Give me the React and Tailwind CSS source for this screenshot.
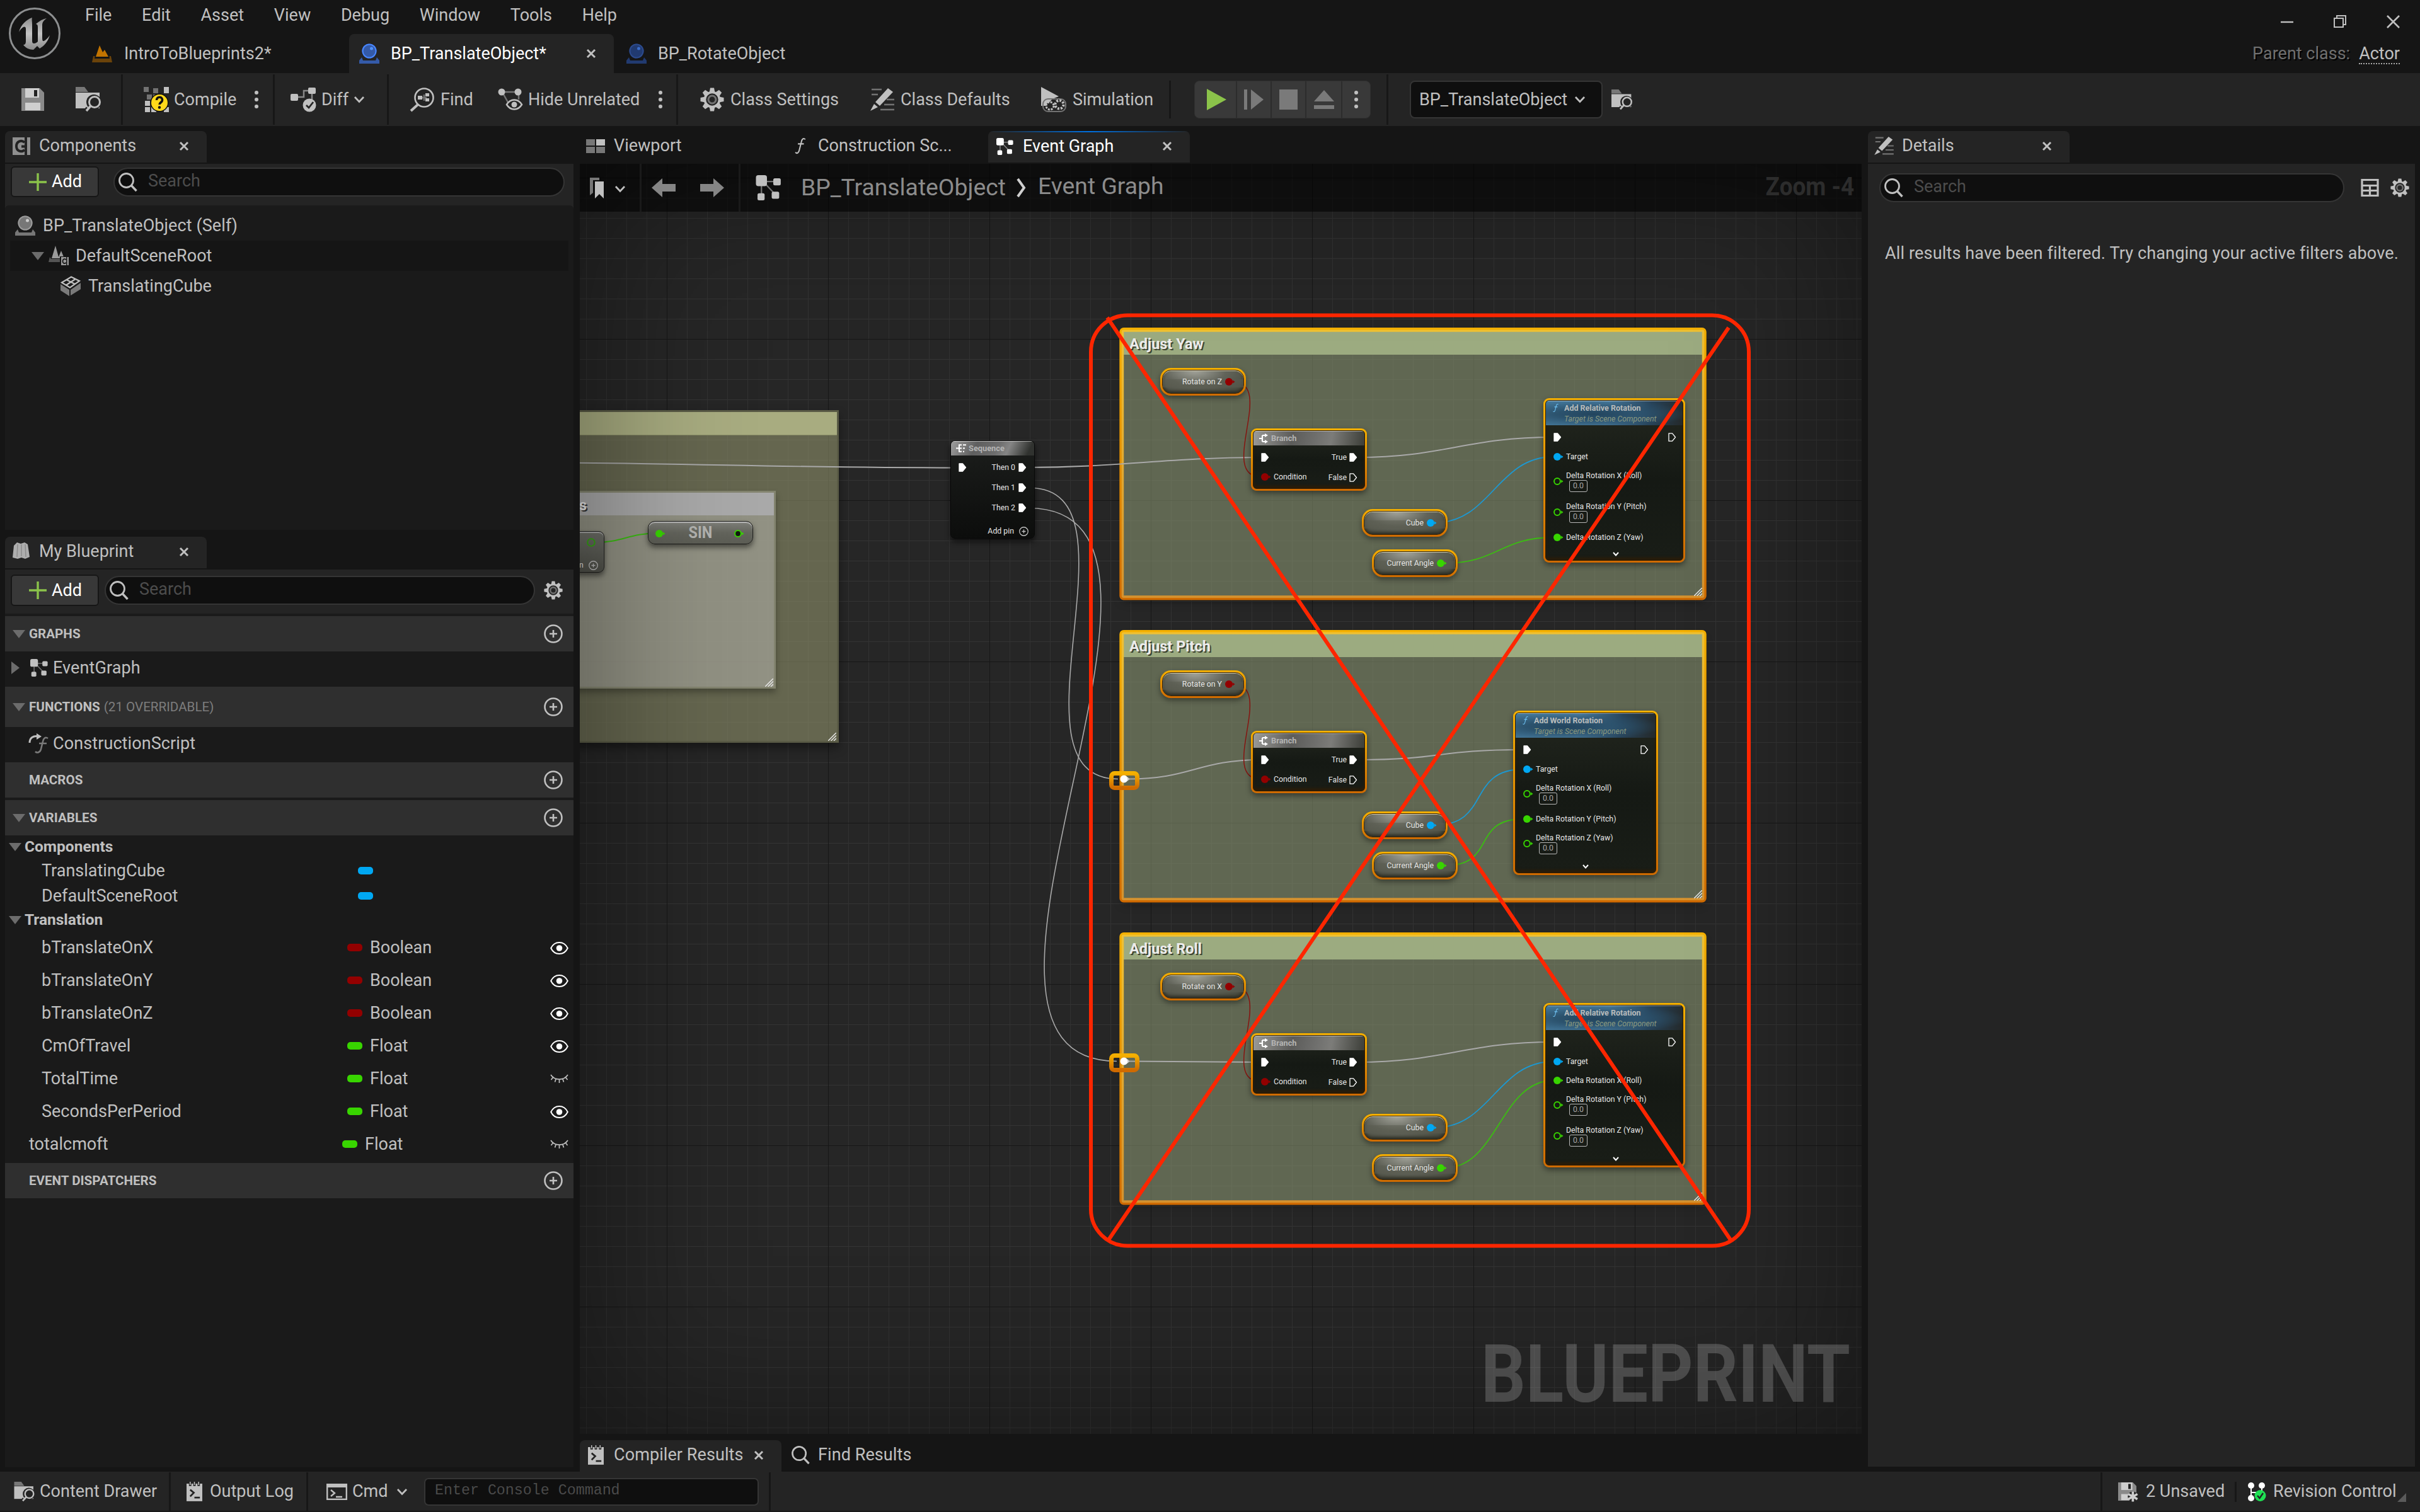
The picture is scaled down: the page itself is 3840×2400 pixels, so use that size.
import React from "react";

/* ---------- icons ---------- */
const Svg = ({ c = "", vb = "0 0 32 32", children }) => (
  <svg viewBox={vb} className={"shrink-0 overflow-visible " + c} fill="none">{children}</svg>
);
const L = "#c0c0c0", D = "#727272";

const Logo = () => (
  <Svg c="w-[84px] h-[84px]" vb="0 0 84 84">
    <defs>
      <linearGradient id="lg" x1="0" y1="0" x2="0" y2="1">
        <stop offset="0" stopColor="#8f8f8f" /><stop offset=".5" stopColor="#c4c4c4" /><stop offset="1" stopColor="#8a8a8a" />
      </linearGradient>
    </defs>
    <circle cx="42" cy="42" r="39.500" stroke="#8d8f90" strokeWidth="3" />
    <path d="M38 17 C29 20 20 28 17 40 C20 34 25 30 27 32 C28.500 33 28 37 28 41 V54 C28 58 27 60 24 60 C27 65 34 68 40 68 L46 62 L50 66 C57 62 63 55 66 45 C62 51 57 55 55 54 C54 53 54 50 54 46 V29 C54 24 57 21 61 18 C55 19 50 22 44 27 C47 28 47 30 47 33 V55 C45 57 43 58 41 58 C38 58 38 55 38 52 V28 C38 23 37 20 38 17 Z" fill="url(#lg)" />
  </Svg>
);
const LevelIcon = () => (
  <Svg c="w-[32px] h-[28px]" vb="0 0 32 28">
    <path d="M6 19 L12 1 L17 12 L20 8 L26 19 Z" fill="#c27400" />
    <path d="M2 18 H4.500 L4 22 H28 L27.500 18 H30 L32 28 H0 Z" fill="#6b430a" />
  </Svg>
);
const Ball = ({ c, a, b, hi }) => (
  <Svg c={c} vb="0 0 32 32">
    <path d="M4 22 L0 27 V32 H32 V27 L28 22 L26 27 H6 Z" fill={b} />
    <circle cx="16" cy="12" r="11.500" fill={b} /><circle cx="16" cy="12" r="10.500" stroke={a} strokeWidth="2" />
    <circle cx="19.500" cy="8" r="2.500" fill={hi} />
  </Svg>
);
const XIcon = ({ c = "w-[14px] h-[14px]" }) => (
  <Svg c={c} vb="0 0 14 14"><path d="M1 1 L13 13 M13 1 L1 13" stroke={L} strokeWidth="3" /></Svg>
);
const Chevron = ({ c = "w-[18px] h-[12px]" }) => (
  <Svg c={c} vb="0 0 18 12"><path d="M2 2 L9 9.500 L16 2" stroke={L} strokeWidth="2.800" /></Svg>
);
const Kebab = () => (
  <Svg c="w-[8px] h-[30px]" vb="0 0 8 30"><circle cx="4" cy="4" r="3" fill={L} /><circle cx="4" cy="15" r="3" fill={L} /><circle cx="4" cy="26" r="3" fill={L} /></Svg>
);
const SaveIcon = ({ c = "w-[36px] h-[36px]", star }) => (
  <Svg c={c} vb="0 0 36 36">
    <path d="M0 0 H29 L36 7 V36 H0 Z" fill="#8a8a8a" />
    <rect x="6" y="0" width="22" height="15" fill="#cfcfcf" /><rect x="20" y="3" width="5" height="10" fill="#222" />
    <rect x="6" y="23" width="24" height="12" fill="#cfcfcf" />
    {star && <><circle cx="29" cy="28" r="10" fill="#242424" /><path d="M29 18 V38 M20 23 L38 33 M38 23 L20 33" stroke="#cfcfcf" strokeWidth="4.500" /></>}
  </Svg>
);
const FolderIcon = ({ c = "w-[40px] h-[40px]", bg = "#242424" }) => (
  <Svg c={c} vb="0 0 40 40">
    <path d="M0 0 H14 L20 8 H0 Z" fill="#777" />
    <path d="M0 9 H38 V34 H0 Z" fill={L} />
    <circle cx="29" cy="24" r="12" fill={bg} /><path d="M20 34 L14 42" stroke={bg} strokeWidth="8" />
    <circle cx="30" cy="24" r="8.500" stroke={L} strokeWidth="3" /><path d="M24 30 L17 38" stroke={L} strokeWidth="3.500" />
  </Svg>
);
const CompileIcon = () => (
  <Svg c="w-[40px] h-[40px]" vb="0 0 40 40">
    {[[0, 0, D], [15, 2, D], [32, 0, L], [5, 12, D], [15, 12, D], [32, 2, L], [2, 22, L], [2, 32, L], [12, 32, L], [32, 32, L]].map(([x, y, f], i) => (
      <rect key={i} x={x} y={y} width="8" height="8" fill={f} />
    ))}
    <circle cx="25" cy="25" r="14.500" fill="#111" /><circle cx="25" cy="25" r="13" fill="#ffd91a" />
    <path d="M20.500 21 C20.500 14.500 30 15 29.500 21 C29.500 24.500 25 24.500 25 28" stroke="#111" strokeWidth="3.600" />
    <circle cx="25" cy="32.500" r="2.200" fill="#111" />
  </Svg>
);
const DiffIcon = () => (
  <Svg c="w-[40px] h-[40px]" vb="0 0 40 40">
    <path d="M8 16 H21 V6 H30 M34 10 V20" stroke="#888" strokeWidth="2.500" />
    <rect x="0" y="11" width="12" height="11" rx="2" fill={L} /><rect x="28" y="1" width="12" height="10" rx="2" fill={L} />
    <circle cx="30" cy="29" r="10.500" fill={L} /><path d="M25 29 L29 33 L36 24" stroke="#242424" strokeWidth="2.800" />
  </Svg>
);
const FindIcon = () => (
  <Svg c="w-[38px] h-[38px]" vb="0 0 38 38">
    <circle cx="22" cy="16" r="14.500" stroke={L} strokeWidth="2.600" /><path d="M12 27 L1 37" stroke={L} strokeWidth="4" />
    <path d="M15 16 H26 M22 11 V21" stroke={D} strokeWidth="2.500" />
    <rect x="12" y="13" width="7" height="6" fill={L} /><rect x="24" y="9" width="6" height="5" fill={L} /><rect x="24" y="17" width="6" height="5" fill={L} />
  </Svg>
);
const HideIcon = () => (
  <Svg c="w-[38px] h-[36px]" vb="0 0 38 36">
    <path d="M6 6 H32 M8 8 L18 26 M33 10 V18" stroke={D} strokeWidth="2.500" />
    <circle cx="6" cy="6" r="5.500" fill={L} /><circle cx="32" cy="6" r="5.500" fill={L} />
    <path d="M14 26 C20 16 32 16 38 26 C32 36 20 36 14 26 Z" fill="#242424" stroke={L} strokeWidth="2.500" /><circle cx="26" cy="26" r="4.500" fill={L} />
  </Svg>
);
const Gear = ({ c, teeth = L, core = D }) => (
  <Svg c={c} vb="0 0 38 38">
    {[0, 45, 90, 135, 180, 225, 270, 315].map((a) => (
      <path key={a} d="M16 0.500 H22 L23.500 8 H14.500 Z" fill={teeth} transform={`rotate(${a} 19 19)`} />
    ))}
    <circle cx="19" cy="19" r="11.500" stroke={teeth} strokeWidth="3.600" />
    <circle cx="19" cy="19" r="6" stroke={core} strokeWidth="3" />
  </Svg>
);
const PenIcon = ({ c }) => (
  <Svg c={c} vb="0 0 38 36">
    <path d="M2 2 H18 M2 10 H12 M26 18 H38 M22 26 H38 M16 34 H38" stroke={D} strokeWidth="2.600" />
    <path d="M28 0 L36 6 L15 28 L8 22 Z" fill={L} /><path d="M6 25 L12 30 L0 36 Z" fill={L} />
  </Svg>
);
const SimIcon = () => (
  <Svg c="w-[40px] h-[40px]" vb="0 0 40 40">
    <path d="M0 0 L28 15 L18 19 L8 30 L0 30 Z" fill={L} />
    <rect x="3" y="19" width="36" height="20" rx="8" stroke={D} strokeWidth="2" />
    <circle cx="14" cy="30" r="6" fill="#242424" stroke={L} strokeWidth="3" strokeDasharray="3 1.700" /><circle cx="29" cy="28" r="6.500" fill="#242424" stroke={L} strokeWidth="4" strokeDasharray="3 2" />
  </Svg>
);
const GraphIcon = ({ c, f = L, s = D }) => (
  <Svg c={c} vb="0 0 32 32">
    <path d="M8 8 H26 M7 10 V26 M9 8 L25 25" stroke={s} strokeWidth="1.800" />
    <rect x="0" y="0" width="14" height="14" rx="3" fill={f} /><rect x="22" y="4" width="9.500" height="9" rx="2" fill={f} />
    <rect x="2" y="23" width="9" height="9" rx="2" fill={f} /><rect x="20" y="21" width="9.500" height="9" rx="2" fill={f} />
  </Svg>
);
const SearchIcon = ({ c = "w-[30px] h-[30px]" }) => (
  <Svg c={c} vb="0 0 30 30"><circle cx="12.500" cy="12.500" r="11" stroke={L} strokeWidth="2.800" /><path d="M20 20 L28.500 29" stroke={L} strokeWidth="3.400" /></Svg>
);
const Plus = () => (
  <Svg c="w-[28px] h-[28px]" vb="0 0 28 28"><path d="M14 0 V28 M0 14 H28" stroke="#8bc34a" strokeWidth="3.400" /></Svg>
);
const PlusCircle = ({ c = "w-[30px] h-[30px]" }) => (
  <Svg c={c} vb="0 0 30 30"><circle cx="15" cy="15" r="13.500" stroke={L} strokeWidth="2.600" /><path d="M15 9 V21 M9 15 H21" stroke={L} strokeWidth="2.600" /></Svg>
);
const CompIcon = ({ c = "w-[28px] h-[28px]" }) => (
  <Svg c={c} vb="0 0 28 28">
    <path d="M0 0 H19 V28 H0 Z" fill="#8f8f8f" /><rect x="23" y="0" width="5" height="28" fill="#8f8f8f" />
    <path d="M19 8 C14 3.500 6 6 6 14 C6 22 14 24.500 19 20 M14 14.500 H23" stroke="#222" strokeWidth="4" />
  </Svg>
);
const FIcon = ({ c, f = L }) => (
  <Svg c={c} vb="0 0 22 32"><path d="M21 3 C17 -1 14 3 13 8 L9 24 C8 30 4 33 1 29 M6 12 H18" stroke={f} strokeWidth="2.600" /></Svg>
);
const Folded = () => (
  <Svg c="w-[30px] h-[32px]" vb="0 0 30 32"><path d="M3 6 L8 1 L14 3 L20 1 L25 4 L28 24 L21 27 L15 25 L9 27 L1 25 Z" fill="#aeaeae" /><path d="M9 4 L8 24 M15 4 V23 M21 4 L22 24" stroke="#8c8c8c" strokeWidth="1.500" /></Svg>
);
const ListDoc = ({ c }) => (
  <Svg c={c} vb="0 0 26 32">
    <path d="M0 3 H26 V32 H0 Z" fill={L} /><path d="M6 0 V7 M13 0 V7 M20 0 V7" stroke="#242424" strokeWidth="4" /><path d="M6 0 V5 M13 0 V5 M20 0 V5" stroke={L} strokeWidth="1.600" />
    <path d="M6 13 L12 18 L6 24" stroke="#242424" strokeWidth="2.800" /><path d="M13 26 H22" stroke="#242424" strokeWidth="2.800" />
  </Svg>
);
const CmdIcon = () => (
  <Svg c="w-[33px] h-[26px]" vb="0 0 33 26"><rect x="1.200" y="1.200" width="30.600" height="23.600" stroke={L} strokeWidth="2.400" /><rect x="0" y="0" width="33" height="6" fill={L} /><path d="M7 10 L13 15 L7 20 M15 21 H25" stroke={L} strokeWidth="2.400" /></Svg>
);
const Eye = () => (
  <Svg c="w-[29px] h-[20px]" vb="0 0 29 20"><path d="M1.200 10 C7 -2 22 -2 27.800 10 C22 22 7 22 1.200 10 Z" stroke="#fff" strokeWidth="2" /><circle cx="14.500" cy="10" r="4.800" fill="#fff" /></Svg>
);
const EyeShut = () => (
  <Svg c="w-[29px] h-[15px]" vb="0 0 29 15"><path d="M1 1 C7 10.500 22 10.500 28 1 M4.500 5 L1.500 9 M9 8 L7.500 12.500 M14.500 8.500 V14 M20 8 L21.500 12.500 M24.500 5 L27.500 9" stroke={L} strokeWidth="1.700" /></Svg>
);
const TriD = () => <Svg c="w-[20px] h-[13px]" vb="0 0 20 13"><path d="M0 0 H20 L10 13 Z" fill="#6c6c6c" /></Svg>;
const TriR = () => <Svg c="w-[13px] h-[20px]" vb="0 0 13 20"><path d="M0 0 L13 10 L0 20 Z" fill="#6c6c6c" /></Svg>;

/* ---------- shared pieces ---------- */
const Sep = ({ c = "h-[80px]" }) => <div className={"w-[3px] shrink-0 bg-[#171717] " + c} />;
const SearchBox = ({ c }) => (
  <div className={"flex items-center rounded-full border-2 border-[#353535] bg-[#0f0f0f] pl-[6px] " + c}>
    <SearchIcon />
    <span className="-mt-[3px] ml-[17px] text-[#4c4c4c]">Search</span>
  </div>
);
const AddButton = ({ c }) => (
  <div className={"flex shrink-0 items-center rounded-[6px] border-2 border-[#161616] bg-[#383838] pl-[27px] text-white " + c}>
    <Plus /><span className="ml-[8px]">Add</span>
  </div>
);
const PanelTab = ({ c, children }) => (
  <div className={"flex h-[50px] shrink-0 items-center rounded-t-[8px] bg-[#242424] pb-[3px] " + c}>{children}</div>
);

/* ---------- header ---------- */
const Header = () => (
  <header className="flex h-[116px] bg-[#151515]">
    <div className="w-[110px] pl-[13px] pt-[11px]"><Logo /></div>
    <div className="flex w-[2600px] flex-col justify-between">
      <nav className="flex h-[48px] items-center gap-[47.700px] pl-[25px]">
        {["File", "Edit", "Asset", "View", "Debug", "Window", "Tools", "Help"].map((m) => <span key={m}>{m}</span>)}
      </nav>
      <div className="flex h-[62px] items-center">
        <div className="flex w-[444px] items-center pl-[36px]"><LevelIcon /><span className="ml-[19px]">IntroToBlueprints2*</span></div>
        <div className="flex h-[62px] w-[420px] items-center rounded-t-[8px] bg-[#242424] pl-[16px] text-white">
          <Ball c="w-[32px] h-[32px]" a="#4886ff" b="#345aa8" hi="#4f92ff" />
          <span className="ml-[18px] w-[311px]">BP_TranslateObject*</span><XIcon />
        </div>
        <div className="flex items-center pl-[20px]">
          <Ball c="w-[32px] h-[32px]" a="#2c4a8c" b="#213a70" hi="#3a6cc8" /><span className="ml-[18px]">BP_RotateObject</span>
        </div>
      </div>
    </div>
    <div className="ml-auto flex flex-col items-end pr-[32px]">
      <div className="flex h-[68px] items-center gap-[64px]">
        <Svg c="w-[20px] h-[20px]" vb="0 0 20 20"><path d="M0 11 H20" stroke={L} strokeWidth="2.400" /></Svg>
        <Svg c="w-[20px] h-[20px]" vb="0 0 20 20"><rect x="1" y="5" width="14" height="14" stroke={L} strokeWidth="2" /><path d="M5 5 V1 H19 V15 H15" stroke={L} strokeWidth="2" /></Svg>
        <Svg c="w-[21px] h-[21px]" vb="0 0 21 21"><path d="M1 1 L20 20 M20 1 L1 20" stroke={L} strokeWidth="2.600" /></Svg>
      </div>
      <div className="flex h-[34px] items-center">
        <span className="mr-[14px] text-[#6f6f6f] [text-shadow:2px_2px_0_#000]">Parent class:</span>
        <span className="mt-[3px] border-b-2 border-dotted border-[#aaa] pb-[1px]">Actor</span>
      </div>
    </div>
  </header>
);

const Toolbar = () => (
  <div className="flex h-[84px] items-center bg-[#242424]">
    <div className="flex w-[192px] items-center pl-[34px]"><SaveIcon /><FolderIcon c="ml-[50px] w-[40px] h-[40px]" /></div><Sep />
    <div className="flex w-[238px] items-center pl-[33px]"><CompileIcon /><span className="ml-[8px] w-[127px]">Compile</span><Kebab /></div><Sep />
    <div className="flex w-[178px] items-center pl-[25px]"><DiffIcon /><span className="ml-[9px] w-[51px]">Diff</span><Chevron /></div><Sep />
    <div className="flex w-[456px] items-center pl-[34px]"><FindIcon /><span className="ml-[10px] w-[91px]">Find</span><HideIcon /><span className="ml-[10px] w-[206px]">Hide Unrelated</span><Kebab /></div><Sep />
    <div className="flex w-[779px] items-center pl-[35px]">
      <Gear c="w-[38px] h-[38px]" /><span className="ml-[10px] w-[222px]">Class Settings</span>
      <PenIcon c="w-[38px] h-[36px]" /><span className="ml-[10px] w-[223px]">Class Defaults</span>
      <SimIcon /><span className="ml-[10px]">Simulation</span>
    </div><Sep c="h-[60px]" />
    <div className="ml-[37px] flex h-[60px] w-[280px] items-center divide-x-2 divide-[#2c2c2c] rounded-[8px] border border-[#303030] bg-[#393939]">
      <div className="flex h-full w-[67px] items-center pl-[19px]"><Svg c="w-[31px] h-[34px]" vb="0 0 31 34"><path d="M0 0 L31 17 L0 34 Z" fill="#8bc34a" /></Svg></div>
      <div className="flex h-full w-[55px] items-center justify-center"><Svg c="w-[31px] h-[32px]" vb="0 0 31 32"><path d="M0 0 H5 V32 H0 Z M11 0 L31 16 L11 32 Z" fill="#7a7a7a" /></Svg></div>
      <div className="flex h-full w-[55px] items-center justify-center"><div className="h-[32px] w-[29px] bg-[#7a7a7a]" /></div>
      <div className="flex h-full w-[57px] items-center justify-center"><Svg c="w-[32px] h-[32px]" vb="0 0 32 32"><path d="M16 1 L32 19 H0 Z M0 25 H32 V31 H0 Z" fill="#7a7a7a" /></Svg></div>
      <div className="flex h-full flex-1 items-center justify-center"><Kebab /></div>
    </div>
    <Sep c="ml-[25px] h-[80px]" />
    <div className="ml-[34px] flex h-[60px] w-[306px] items-center rounded-[8px] border-2 border-[#353535] bg-[#0f0f0f] pl-[13px]"><span className="w-[246px]">BP_TranslateObject</span><Chevron /></div>
    <FolderIcon c="ml-[14px] w-[33px] h-[33px]" />
  </div>
);

/* ---------- left column ---------- */
const Section = ({ c = "h-[56px]", title, note, open }) => (
  <div className={"flex items-center bg-[#2f2f2f] pl-[12px] pr-[17px] text-[20.600px] font-bold " + c}>
    <div className="w-[26px]">{open && <TriD />}</div>
    <span>{title}</span>{note && <span className="ml-[6px] font-normal text-[#7d7d7d]">{note}</span>}
    <div className="ml-auto"><PlusCircle /></div>
  </div>
);
const VarRow = ({ name, type, shut, root }) => (
  <div className={"flex h-[52px] items-center pr-[8px] " + (root ? "pl-[38px]" : "pl-[58px]")}>
    <span className={root ? "w-[497px]" : "w-[485px]"}>{name}</span>
    <span className={"mr-[12px] h-[12px] w-[24px] rounded-[5px] " + (type === "Boolean" ? "bg-[#930000]" : "bg-[#38d500]")} />
    <span>{type}</span>
    <div className="ml-auto mt-[1px]">{shut ? <EyeShut /> : <Eye />}</div>
  </div>
);
const Left = () => (
  <div className="flex w-[910px] shrink-0 flex-col pl-[8px]">
    <PanelTab c="mt-[8px] w-[320px] pl-[12px]"><CompIcon /><span className="ml-[14px] w-[223px]">Components</span><XIcon /></PanelTab>
    <div className="mt-[2px] h-[581px] bg-[#242424]">
      <div className="flex h-[66px] items-center pb-[9px] pl-[9px]"><AddButton c="h-[49px] w-[140px]" /><SearchBox c="ml-[23px] h-[46px] w-[716px]" /></div>
      <div className="h-[515px] rounded-t-[6px] bg-[#1a1a1a] px-[8px] pt-[8px]">
        <div className="flex h-[48px] items-center pl-[8px]"><Ball c="w-[32px] h-[32px]" a="#9a9a9a" b="#777" hi="#ccc" /><span className="ml-[12px] tracking-[.08px]">BP_TranslateObject (Self)</span></div>
        <div className="flex h-[48px] items-center bg-[#151515] pl-[34px]">
          <TriD />
          <Svg c="ml-[7px] h-[32px] w-[32px]" vb="0 0 32 32">
            <path d="M5 20 L11 0 L16 18 L20 8 L25 20 Z" fill="#9a9a9a" /><path d="M2 18 L0 26 H18 V21 H4 Z" fill="#555" />
            <rect x="18" y="17" width="14" height="15" fill="#151515" /><rect x="20" y="18" width="8" height="13" fill="#9a9a9a" /><rect x="29.500" y="18" width="2.500" height="13" fill="#9a9a9a" /><path d="M28 22 C24 20 22.500 22 22.500 25 C22.500 28 25 29 28 27" stroke="#151515" strokeWidth="1.800" />
          </Svg>
          <span className="ml-[11px]">DefaultSceneRoot</span>
        </div>
        <div className="flex h-[48px] items-center pl-[80px]">
          <Svg c="h-[32px] w-[32px]" vb="0 0 32 32">
            <path d="M0 13 L14 22 V32 L0 23 Z M32 11 V21 L16 31 V22 Z" fill="#7a7a7a" /><path d="M2 10.500 L17 1.500 L30 8 L15 18.500 Z M9 14.500 L23.500 5 M9.500 6 L23 13" stroke={L} strokeWidth="2.200" />
          </Svg>
          <span className="ml-[12px]">TranslatingCube</span>
        </div>
      </div>
    </div>
    <PanelTab c="mt-[11px] w-[320px] pl-[11px]"><Folded /><span className="ml-[13px] w-[223px]">My Blueprint</span><XIcon /></PanelTab>
    <div className="mt-[2px] h-[1425px] bg-[#1a1a1a]">
      <div className="flex h-[70px] items-center bg-[#242424] pb-[4px] pl-[9px]"><AddButton c="h-[50px] w-[140px]" /><SearchBox c="ml-[9px] h-[46px] w-[683px]" /><Gear c="ml-[14px] h-[30px] w-[30px]" /></div>
      <Section c="mt-[4px] h-[56px]" title="GRAPHS" open />
      <div className="flex h-[56px] items-center pb-[4px] pl-[10px]"><TriR /><GraphIcon c="ml-[16px] h-[28px] w-[30px]" /><span className="ml-[7px] tracking-[.1px]">EventGraph</span></div>
      <Section c="h-[64px]" title="FUNCTIONS" note="(21 OVERRIDABLE)" open />
      <div className="flex h-[56px] items-center pb-[4px] pl-[38px]">
        <Svg c="h-[32px] w-[31px]" vb="0 0 31 32"><path d="M1 15 C1 7 7 4 13 4.500" stroke={L} strokeWidth="3" /><path d="M12 0 L20 5 L12 10 Z" fill={L} /><path d="M30 8 C26 5 23 8 22 13 L19 25 C18 30 13 32 10 29 M16 16 H28" stroke="#7a7a7a" strokeWidth="2.600" /></Svg>
        <span className="ml-[7px] tracking-[.1px]">ConstructionScript</span>
      </div>
      <Section title="MACROS" />
      <Section c="mt-[4px] h-[56px]" title="VARIABLES" open />
      <div className="flex h-[36px] items-center pl-[6px] font-bold text-[24.500px]"><TriD /><span className="ml-[5px]">Components</span></div>
      {["TranslatingCube", "DefaultSceneRoot"].map((n) => (
        <div key={n} className="flex h-[40px] items-center pl-[58px]"><span className="w-[502px]">{n}</span><span className="h-[12px] w-[24px] rounded-[5px] bg-[#00a8f3]" /></div>
      ))}
      <div className="flex h-[36px] items-center pl-[6px] font-bold text-[24.500px]"><TriD /><span className="ml-[5px]">Translation</span></div>
      <VarRow name="bTranslateOnX" type="Boolean" /><VarRow name="bTranslateOnY" type="Boolean" /><VarRow name="bTranslateOnZ" type="Boolean" />
      <VarRow name="CmOfTravel" type="Float" /><VarRow name="TotalTime" type="Float" shut /><VarRow name="SecondsPerPeriod" type="Float" />
      <VarRow name="totalcmoft" type="Float" shut root />
      <Section c="mt-[4px] h-[56px]" title="EVENT DISPATCHERS" />
    </div>
  </div>
);

/* ---------- graph canvas (free placement, window coordinates) ---------- */
const At = ({ x, y, c = "", children }) => <div className={"absolute " + c} style={{ left: x, top: y }}>{children}</div>;
const MidText = ({ x, y, c = "", right, children }) => (
  <div className={"absolute flex h-0 items-center whitespace-nowrap text-[12.3px] leading-none text-[#e6e6e6] " + c}
    style={right ? { right: 3840 - x, top: y } : { left: x, top: y }}>{children}</div>
);
const Exec = ({ x, y, open }) => (
  <At x={x} y={y - 7} c="leading-none"><svg className="block h-[14px] w-[12px] overflow-visible" viewBox="0 0 12 14"><path d="M1 .8 H6.500 L11.500 7 L6.500 13.200 H1 Z" fill={open ? "none" : "#fff"} stroke="#fff" strokeWidth="1.300" strokeLinejoin="round" /></svg></At>
);
const Pin = ({ x, y, f, open }) => (
  <At x={x - 7} y={y - 7}><svg className="block h-[14px] w-[18px]" viewBox="0 0 18 14"><circle cx="7" cy="7" r={open ? 4.900 : 6} fill={open ? "#141a12" : f} stroke={f} strokeWidth={open ? 2 : 0} /><path d="M13.200 4.500 L16.500 7 L13.200 9.500 Z" fill={f} /></svg></At>
);
const BLUE = "#00a8f3", GREEN = "#38d500", RED = "#930000";

const Pill = ({ x, y, label, f }) => (
  <>
    <At x={x} y={y} c="h-[44px] w-[136px] rounded-[17px] bg-gradient-to-b from-[#f4b000] to-[#cf6a00] p-[3px] shadow-[0_4px_8px_rgba(0,0,0,.4)]">
      <div className="h-full w-full rounded-[14px] border border-[#3a2508] bg-[radial-gradient(ellipse_at_40%_0%,#a4a59c_0%,#62645a_45%,#43463a_100%)] shadow-[inset_0_1px_1px_#d8d0b0,inset_0_-3px_5px_#2c2c22]">
        <div className="mt-[14px] h-[13px] w-full bg-[rgba(90,92,80,.5)]" />
      </div>
    </At>
    <MidText x={x + 98} y={y + 22} right>{label}</MidText>
    <Pin x={x + 109} y={y + 22} f={f} />
  </>
);
const NodeFrame = ({ x, y, c, head }) => (
  <At x={x} y={y} c={"rounded-[9px] bg-gradient-to-b from-[#f4b000] to-[#cf6a00] p-[3px] shadow-[0_4px_10px_rgba(0,0,0,.45)] " + c}>
    <div className="h-full w-full overflow-hidden rounded-[6px] border border-[#2c1c04] bg-gradient-to-b from-[#23271f] via-[#151914] to-[#191d17] shadow-[inset_0_-4px_4px_#2b1c08]">
      <div className={"w-full shadow-[inset_0_1px_0_rgba(255,255,255,.45)] " + head} />
    </div>
  </At>
);
const Branch = ({ x, y }) => (
  <>
    <NodeFrame x={x} y={y} c="h-[99px] w-[184px]" head="h-[23px] bg-[linear-gradient(100deg,#9b9b98_0%,#5c5c5a_35%,#6e6e6c_55%,#7c7c79_70%,#3c3e38_100%)]" />
    <At x={x + 13} y={y + 8}><svg className="block h-[16px] w-[14px]" viewBox="0 0 14 16"><path d="M0 8 H5 M5 3 V13 M5 3 H10 M5 13 H10" stroke="#fff" strokeWidth="2.200" /><path d="M9 0 L14 3 L9 6 Z M9 10 L14 13 L9 16 Z" fill="#fff" /></svg></At>
    <MidText x={x + 32} y={y + 16} c="!text-[12.8px] font-bold !text-[#b4b4b4]">Branch</MidText>
    <Exec x={x + 16} y={y + 46} /><MidText x={x + 152} y={y + 46} right>True</MidText><Exec x={x + 156} y={y + 46} />
    <Pin x={x + 22} y={y + 77} f={RED} /><MidText x={x + 36} y={y + 77}>Condition</MidText>
    <MidText x={x + 152} y={y + 78} right>False</MidText><Exec x={x + 156} y={y + 78} open />
  </>
);
const Rotation = ({ x, y, title, rows, wide }) => {
  let cy = y + 123;
  return (
    <>
      <NodeFrame x={x} y={y} c={wide ? "h-[261px] w-[230px]" : "h-[261px] w-[225px]"} head="h-[39px] bg-[radial-gradient(ellipse_at_35%_55%,#23455e_0%,#2c536e_30%,transparent_75%),linear-gradient(100deg,#44799c_0%,#4a7ea2_45%,#27435a_75%,#24292a_100%)]" />
      <At x={x + 14} y={y + 9}><FIcon c="block h-[13px] w-[11px]" f="#6fc2f2" /></At>
      <MidText x={x + 33} y={y + 16} c="!text-[12.5px] font-bold !text-[#b9bcbc]">{title}</MidText>
      <MidText x={x + 33} y={y + 33} c="italic !text-[#8c9a80]">Target is Scene Component</MidText>
      <Exec x={x + 16} y={y + 62} /><Exec x={x + (wide ? 202 : 198)} y={y + 62} open />
      <Pin x={x + 21.500} y={y + 93} f={BLUE} /><MidText x={x + 36} y={y + 93}>Target</MidText>
      {rows.map(([label, box]) => {
        const t = cy;
        cy += box ? 49 : 30;
        return (
          <React.Fragment key={label}>
            <MidText x={x + 36} y={t}>{label}</MidText>
            <Pin x={x + 21.500} y={box ? t + 9 : t} f={GREEN} open={box} />
            {box && <At x={x + 41} y={t + 7} c="flex h-[19px] w-[29px] items-center justify-center rounded-[3px] border border-[#b8b8b8] text-[12.3px] leading-none text-[#a8a8a8]">0.0</At>}
          </React.Fragment>
        );
      })}
      <At x={x + 110} y={y + 244}><Svg c="block h-[7px] w-[10px]" vb="0 0 10 7"><path d="M1 1 L5 5.500 L9 1" stroke="#fff" strokeWidth="2" /></Svg></At>
    </>
  );
};
const Grip = ({ x, y }) => (
  <At x={x} y={y}><svg className="block h-[13px] w-[13px]" viewBox="0 0 13 13"><path d="M0 13 L13 0 M4.500 13 L13 4.500 M9 13 L13 9" stroke="#e8e8e8" strokeWidth="1.500" /></svg></At>
);
const CommentBox = ({ y, title }) => (
  <>
    <At x={1782} y={y + 6} c="h-[420px] w-[920px] bg-[rgba(135,146,111,.6)] shadow-[0_8px_14px_rgba(0,0,0,.35)]">
      <div className="flex h-[37px] items-center bg-[#9cab80] pl-[10px] pt-[5px] text-[23.500px] font-bold leading-none text-[#ececec] [text-shadow:2px_2px_0_#3c4430]">{title}</div>
    </At>
    <At x={1776} y={y}>
      <svg className="block h-[433px] w-[932px]" viewBox="0 0 932 433" fill="none">
        <rect x="5" y="4.500" width="922" height="423" stroke="url(#selIn)" strokeWidth="4.500" />
        <rect x="2" y="1.700" width="928" height="429" rx="5" stroke="url(#sel)" strokeWidth="3.400" />
      </svg>
    </At>
    <Grip x={2688} y={y + 413} />
  </>
);
const Knot = ({ y }) => (
  <>
    <At x={1760} y={y} c="h-[30px] w-[48px]"><svg className="block h-[30px] w-[48px]" viewBox="0 0 48 30" fill="none"><rect x="3.500" y="3.500" width="41" height="23" rx="5" stroke="url(#sel)" strokeWidth="7" /></svg></At>
    <At x={1777} y={y + 6}><svg className="block h-[13px] w-[16px]" viewBox="0 0 16 13"><circle cx="6.500" cy="6.500" r="6" fill="#fff" /><path d="M12 3 L15.500 6.500 L12 10 Z" fill="#ccc" /></svg></At>
  </>
);
const wire = (x1, y1, x2, y2, t) => `M${x1} ${y1} C${x1 + t} ${y1} ${x2 - t} ${y2} ${x2} ${y2}`;

const GROUPS = [
  { dy: 0, title: "Adjust Yaw", pill: "Rotate on Z", rot: { x: 2449, y: 632, title: "Add Relative Rotation", rows: [["Delta Rotation X (Roll)", true], ["Delta Rotation Y (Pitch)", true], ["Delta Rotation Z (Yaw)", false]] }, green: 853 },
  { dy: 480, title: "Adjust Pitch", pill: "Rotate on Y", rot: { x: 2401, y: 1128, wide: true, title: "Add World Rotation", rows: [["Delta Rotation X (Roll)", true], ["Delta Rotation Y (Pitch)", false], ["Delta Rotation Z (Yaw)", true]] }, green: 1300 },
  { dy: 960, title: "Adjust Roll", pill: "Rotate on X", rot: { x: 2449, y: 1592, title: "Add Relative Rotation", rows: [["Delta Rotation X (Roll)", false], ["Delta Rotation Y (Pitch)", true], ["Delta Rotation Z (Yaw)", true]] }, green: 1715 },
];

const Canvas = () => (
  <div className="relative h-[2016px] overflow-hidden bg-[#262626]">
    <div className="absolute inset-0 bg-[linear-gradient(to_right,#171717_1px,transparent_1px),linear-gradient(to_bottom,#171717_1px,transparent_1px),linear-gradient(to_right,#323232_1px,transparent_1px),linear-gradient(to_bottom,#343434_1px,transparent_1px)] bg-[length:256px_256px,256px_256px,32px_32px,32px_32px] bg-[position:138px_0,0_22px,10px_0,0_22px]" />
    <div className="absolute -left-[920px] -top-[260px] h-[2400px] w-[3840px]">
      {/* comment boxes on the left */}
      <At x={900} y={651} c="h-[528px] w-[431px] border-[3px] border-[#5a5b46] bg-[rgba(143,145,106,.6)] shadow-[0_8px_14px_rgba(0,0,0,.4)]"><div className="h-[37px] border-b border-[#8b8f68] bg-[#a8ac80]" /></At>
      <At x={900} y={779} c="h-[314px] w-[331px] border-[3px] border-[#83846f] bg-[rgba(175,173,167,.6)] shadow-[0_6px_10px_rgba(0,0,0,.3)]"><div className="h-[36px] bg-[#a9a9a9]" /></At>
      <MidText x={919} y={803} c="!text-[23.500px] font-bold [text-shadow:2px_2px_0_#333]">s</MidText>
      <Grip x={1214} y={1077} /><Grip x={1314} y={1163} />
      {GROUPS.map((g) => <CommentBox key={g.title} y={520 + g.dy} title={g.title} />)}

      <At x={0} y={0}>
        <svg className="block h-[2400px] w-[3840px]" viewBox="0 0 3840 2400" fill="none">
          <defs>
            <linearGradient id="sel" x1="0" y1="0" x2="0" y2="1"><stop offset="0" stopColor="#f4b000" /><stop offset="1" stopColor="#cf6a00" /></linearGradient>
            <linearGradient id="selIn" x1="0" y1="0" x2="0" y2="1"><stop offset="0" stopColor="#efc133" /><stop offset="1" stopColor="#d5922f" /></linearGradient>
          </defs>
          <g stroke="#a9a9a9" strokeWidth="1.900">
            <path d={wire(780, 734, 1521, 742.5, 300)} />
            <path d={wire(1628, 742, 2001, 726, 150)} />
            <path d={wire(1634, 774.5, 1774, 1236.5, 187)} strokeWidth="1.600" />
            <path d={wire(1632, 806.5, 1772, 1684.5, 330)} strokeWidth="1.600" />
            <path d={wire(1790, 1236.5, 2001, 1206, 100)} /><path d={wire(1790, 1684.5, 2001, 1686, 60)} />
            {GROUPS.map((g) => <path key={g.dy} d={wire(2153, 726 + g.dy, g.rot.x + 16, g.rot.y + 62, 140)} />)}
          </g>
          {GROUPS.map((g) => (
            <g key={g.dy} strokeWidth="1.800">
              <path d={wire(1956, 606 + g.dy, 2001, 757 + g.dy, 70)} stroke="#861410" strokeWidth="1.500" />
              <path d={wire(2276, 830 + g.dy, g.rot.x + 16, g.rot.y + 93, 90)} stroke="#1c99d3" />
              <path d={wire(2292, 894 + g.dy, g.rot.x + 16, g.green, 84)} stroke="#3bbd12" />
            </g>
          ))}
          <path d={wire(944, 861, 1042, 846.5, 44)} stroke="#3bbd12" strokeWidth="1.900" />
        </svg>
      </At>

      {/* SIN and its source node */}
      <At x={880} y={843} c="h-[66px] w-[79px] rounded-[9px] border border-[#1c1c1a] bg-gradient-to-b from-[#6e6f68] to-[#50514a] shadow-[inset_0_2px_1px_#aaa,0_5px_8px_rgba(0,0,0,.5)]" />
      <At x={931} y={854}><svg className="block h-[14px] w-[14px]" viewBox="0 0 14 14"><circle cx="7" cy="7" r="5.800" stroke="#33a810" strokeWidth="2" fill="none" /></svg></At>
      <MidText x={919} y={897}>n</MidText>
      <At x={934} y={890}><PlusCircle c="block h-[15px] w-[15px]" /></At>
      <At x={1028} y={827} c="flex h-[37px] w-[167px] items-center justify-center rounded-[11px] border border-[#1a1a18] bg-gradient-to-b from-[#7f807a] via-[#64655d] to-[#5c5d55] shadow-[inset_0_2px_1px_#bbb,0_5px_8px_rgba(0,0,0,.5)]">
        <span className="scale-x-[.88] text-[26.600px] font-bold leading-none text-[#b3b3b0]">SIN</span>
      </At>
      <Pin x={1046} y={846.5} f={GREEN} /><Pin x={1171} y={846.5} f={GREEN} open />

      {/* Sequence */}
      <At x={1508} y={699} c="h-[156px] w-[134px] overflow-hidden rounded-[7px] border border-[#080808] bg-gradient-to-b from-[#1c1e1c] to-[#0c0d0c] shadow-[0_5px_8px_rgba(0,0,0,.6)]">
        <div className="h-[23px] bg-[linear-gradient(115deg,#a0a0a0_0%,#5f5f5f_30%,#6e6e6e_55%,#858585_68%,#30322f_92%)] shadow-[inset_0_1px_0_rgba(255,255,255,.5)]" />
      </At>
      <At x={1517} y={705}><svg className="block h-[13px] w-[16px]" viewBox="0 0 16 13"><path d="M0 6.500 H9 M5 1 V12 M4 1.200 H9 M4 11.800 H9 M11 1.200 H16 M11 6.500 H14 M11 11.800 H13" stroke="#fff" strokeWidth="2" /></svg></At>
      <MidText x={1537} y={712} c="!text-[12.8px] font-bold !text-[#b4b4b4]">Sequence</MidText>
      <Exec x={1521} y={742} />
      {["Then 0", "Then 1", "Then 2"].map((t, i) => (
        <React.Fragment key={t}><MidText x={1611} y={742 + 32 * i} right>{t}</MidText><Exec x={1616} y={742 + 32 * i} /></React.Fragment>
      ))}
      <MidText x={1609} y={843} right>Add pin</MidText>
      <At x={1616.5} y={835.5}><PlusCircle c="block h-[15px] w-[15px]" /></At>

      {GROUPS.map((g) => (
        <React.Fragment key={g.title}>
          <Pill x={1841} y={584 + g.dy} label={g.pill} f={RED} />
          <Branch x={1985} y={680 + g.dy} />
          <Pill x={2161} y={808 + g.dy} label="Cube" f={BLUE} />
          <Pill x={2177} y={872 + g.dy} label="Current Angle" f={GREEN} />
          <Rotation {...g.rot} />
        </React.Fragment>
      ))}
      <Knot y={1224} /><Knot y={1672} />
    </div>

    {/* edge darkening, watermark and annotation */}
    <div className="absolute inset-0 shadow-[inset_0_0_260px_rgba(0,0,0,.46)]" />
    <div className="absolute -top-[260px] -left-[920px] h-[2400px] w-[3840px]">
      <svg className="block h-[2400px] w-[3840px]" viewBox="0 0 3840 2400" fill="none" stroke="#ff2600" strokeWidth="6">
        <rect x="1731" y="500.500" width="1044" height="1477" rx="58" />
        <path d="M1757 504 L2746 1968 M2743 520 L1759 1968" />
      </svg>
    </div>
    <div className="absolute bottom-[31px] right-[18px] origin-right scale-x-[.868] text-[128px] font-bold leading-none text-white/[.19]">BLUEPRINT</div>
    <div className="absolute inset-x-0 top-0 flex h-[76px] items-center bg-black/55 pl-[16px] text-[37.300px] text-[#8c8c8c]">
      <Svg c="h-[33px] w-[22px]" vb="0 0 22 33"><path d="M0 0 H15 V4 H5 V24 L0 28 Z" fill="#777" /><path d="M8 6 H22 V33 L15 26 L8 33 Z" fill={L} /></Svg>
      <Chevron c="ml-[17px] mt-[4px] h-[12px] w-[18px]" />
      <div className="ml-[22px] h-full w-[3px] bg-[#1a1a1a]" />
      <Svg c="ml-[16px] h-[30px] w-[38px]" vb="0 0 38 30"><path d="M0 15 L17 0 V9 H38 V21 H17 V30 Z" fill="#858585" /></Svg>
      <Svg c="ml-[39px] h-[30px] w-[38px]" vb="0 0 38 30"><path d="M38 15 L21 0 V9 H0 V21 H21 V30 Z" fill="#858585" /></Svg>
      <div className="ml-[23px] h-full w-[3px] bg-[#1a1a1a]" />
      <GraphIcon c="ml-[23px] h-[40px] w-[43px]" />
      <span className="ml-[30px] w-[342px]">BP_TranslateObject</span>
      <Svg c="h-[30px] w-[14px]" vb="0 0 14 30"><path d="M2 1 L12 15 L2 29" stroke="#cfcfcf" strokeWidth="4" /></Svg>
      <span className="-mt-[4px] ml-[20px]">Event Graph</span>
      <span className="ml-auto mr-[12px] -mt-[3px] origin-right scale-x-[.9] text-[41px] font-bold text-[#2c2c2c]">Zoom -4</span>
    </div>
  </div>
);

const Center = () => (
  <div className="ml-[10px] flex w-[2034px] shrink-0 flex-col">
    <div className="flex h-[60px] items-center pt-[6px]">
      <div className="flex w-[344px] items-center pb-[3px] pl-[10px]">
        <Svg c="h-[22px] w-[30px]" vb="0 0 30 22"><path d="M0 0 H14 V10 H0 Z M0 12 H14 V22 H0 Z M16 12 H30 V22 H16 Z" fill="#777" /><path d="M16 0 H30 V10 H16 Z" fill={L} /></Svg>
        <span className="ml-[14px]">Viewport</span>
      </div>
      <div className="flex w-[304px] items-center pb-[3px]"><FIcon c="-ml-[4px] h-[25px] w-[20px]" /><span className="ml-[18px] whitespace-nowrap">Construction Sc...</span></div>
      <div className="h-[50px] w-[320px] overflow-hidden rounded-t-[8px] bg-[#242424]">
        <div className="h-[2px] bg-gradient-to-r from-transparent via-[#0070e0] to-transparent" />
        <div className="flex h-[46px] items-center pb-[2px] pl-[12px] text-white"><GraphIcon c="h-[27px] w-[29px]" f="#fff" s="#888" /><span className="ml-[14px] w-[222px]">Event Graph</span><XIcon /></div>
      </div>
    </div>
    <Canvas />
    <div className="mt-[10px] flex h-[50px] items-center">
      <PanelTab c="w-[320px] pl-[13px]"><ListDoc c="h-[31px] w-[25px]" /><span className="ml-[16px] w-[223px] whitespace-nowrap tracking-[.08px]">Compiler Results</span><XIcon /></PanelTab>
      <SearchIcon c="ml-[16px] mb-[3px] h-[29px] w-[29px]" /><span className="mb-[3px] ml-[13px] tracking-[.08px]">Find Results</span>
    </div>
  </div>
);

const Right = () => (
  <div className="ml-[10px] w-[868px] shrink-0">
    <PanelTab c="mt-[8px] w-[320px] pl-[10px]"><PenIcon c="h-[29px] w-[31px]" /><span className="ml-[13px] w-[223px]">Details</span><XIcon /></PanelTab>
    <div className="mt-[2px] h-[2068px] bg-[#242424]">
      <div className="flex h-[76px] items-center pl-[18px]">
        <SearchBox c="h-[46px] w-[738px]" />
        <Svg c="ml-[26px] h-[28px] w-[29px]" vb="0 0 29 28"><path d="M2 1.500 H27 V26.500 H2 Z M2 10.500 H27 M2 18.500 H27 M14.500 10 V26" stroke={L} strokeWidth="3.200" /></Svg>
        <Gear c="ml-[18px] h-[30px] w-[30px]" />
      </div>
      <div className="pt-[53px] pl-[27px] tracking-[.15px] whitespace-nowrap">All results have been filtered. Try changing your active filters above.</div>
    </div>
  </div>
);

const Status = () => (
  <footer className="flex h-[64px] items-center border-b-2 border-[#191919] bg-[#242424] pt-px">
    <div className="flex w-[268px] items-center pl-[22px]"><FolderIcon c="h-[32px] w-[33px]" /><span className="ml-[8px] whitespace-nowrap">Content Drawer</span></div><Sep c="h-full" />
    <div className="flex w-[215px] items-center pl-[25px]"><ListDoc c="h-[31px] w-[25px]" /><span className="ml-[12px] whitespace-nowrap">Output Log</span></div><Sep c="h-full" />
    <div className="flex w-[731px] items-center pl-[29px]">
      <CmdIcon /><span className="ml-[8px] w-[70px]">Cmd</span><Chevron />
      <div className="ml-[26px] flex h-[44px] w-[531px] items-center rounded-[7px] border-2 border-[#353535] bg-[#0f0f0f] pb-px pl-[15px] font-['Liberation_Mono',monospace] text-[23.300px] text-[#4a4a4a]">Enter Console Command</div>
    </div><Sep c="h-full" />
    <div className="ml-auto flex h-full items-center pr-[6px]">
      <Sep c="h-full" />
      <SaveIcon c="ml-[24px] h-[29px] w-[31px]" star /><span className="ml-[14px] w-[141px] whitespace-nowrap">2 Unsaved</span><Sep c="h-[32px]" />
      <Svg c="ml-[18px] h-[30px] w-[29px]" vb="0 0 29 30"><path d="M5 5 V25 M22 5 V16 H5" stroke="#fff" strokeWidth="2" /><circle cx="5" cy="5" r="5" fill="#fff" /><circle cx="22" cy="5" r="5" fill="#fff" /><circle cx="5" cy="25" r="5" fill="#fff" /><circle cx="19.500" cy="21" r="9" fill="#1fe053" /><path d="M15 21 L18.500 25 L24 17" stroke="#222" strokeWidth="2.400" /></Svg>
      <span className="ml-[11px] w-[197px] whitespace-nowrap">Revision Control</span>
      <Svg c="mt-[18px] mr-[16px] h-[14px] w-[14px]" vb="0 0 14 14"><path d="M14 0 V14 H0 Z" fill="#5a5a5a" /></Svg>
    </div>
  </footer>
);

export default function App() {
  return (
    <div className="h-[2400px] w-[3840px] overflow-hidden bg-[#151515] font-[Roboto,sans-serif] text-[27px] leading-none text-[#c0c0c0]">
      <Header />
      <Toolbar />
      <main className="flex h-[2136px]"><Left /><Center /><Right /></main>
      <Status />
    </div>
  );
}
